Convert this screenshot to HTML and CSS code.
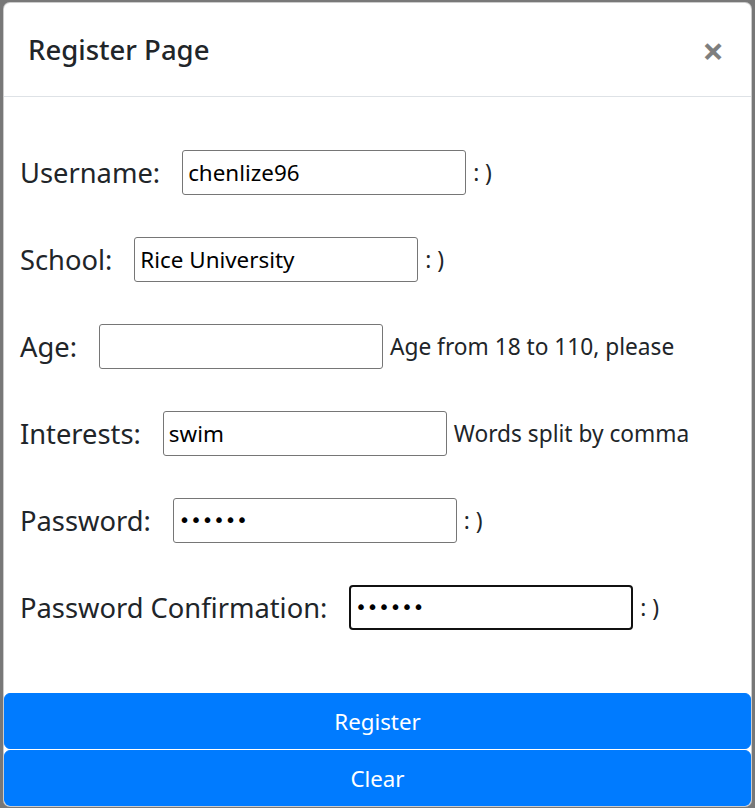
FILE: index.html
```html
<!DOCTYPE html>
<html>
<head>
<meta charset="utf-8">
<title>Register Page</title>
<link rel="stylesheet" href="styles.css">
</head>
<body>
<div class="modal">
  <div class="modal-header">
    <h5 class="modal-title">Register Page</h5>
    <button class="close" type="button" aria-label="Close">&times;</button>
  </div>
  <form class="modal-body">
    <div class="row">
      <label class="label" for="username">Username:</label>
      <input class="field" id="username" type="text" value="chenlize96">
      <span class="hint">: )</span>
    </div>
    <div class="row">
      <label class="label" for="school">School:</label>
      <input class="field" id="school" type="text" value="Rice University">
      <span class="hint">: )</span>
    </div>
    <div class="row">
      <label class="label" for="age">Age:</label>
      <input class="field" id="age" type="text" value="">
      <span class="hint">Age from 18 to 110, please</span>
    </div>
    <div class="row">
      <label class="label" for="interests">Interests:</label>
      <input class="field" id="interests" type="text" value="swim">
      <span class="hint">Words split by comma</span>
    </div>
    <div class="row">
      <label class="label" for="password">Password:</label>
      <input class="field field-pass" id="password" type="password" value="123456">
      <span class="hint">: )</span>
    </div>
    <div class="row">
      <label class="label" for="confirm">Password Confirmation:</label>
      <input class="field field-pass field-focus" id="confirm" type="password" value="123456">
      <span class="hint">: )</span>
    </div>
  </form>
  <div class="actions">
    <button class="btn" type="button">Register</button>
    <button class="btn" type="button">Clear</button>
  </div>
</div>
</body>
</html>
```

FILE: styles.css
```css
html, body {
  margin: 0;
  padding: 0;
  height: 100%;
}
body {
  background: #787878;
  font-family: "Noto Sans", "Open Sans", sans-serif;
  color: #212529;
  padding: 2px 3px 1px 3px;
  box-sizing: border-box;
}
.modal {
  background: #fff;
  border: 1px solid rgba(0,0,0,.2);
  border-radius: 7px;
  height: 805px;
  box-sizing: border-box;
  display: flex;
  flex-direction: column;
  overflow: hidden;
}
.modal-header {
  display: flex;
  align-items: center;
  justify-content: space-between;
  padding: 24px 24px;
  border-bottom: 1px solid #dee2e6;
  height: 94px;
  box-sizing: border-box;
}
.modal-title {
  margin: 0;
  font-size: 27.5px;
  font-weight: 500;
  line-height: 45px;
  color: #212529;
}
.close {
  background: none;
  border: 0;
  padding: 0;
  font-family: "Noto Sans", sans-serif;
  font-size: 38px;
  font-weight: 700;
  line-height: 1;
  color: #000;
  opacity: .5;
  margin-right: 3px;
}
.modal-body {
  flex: 1;
  padding: 53px 16px 0 16px;
  margin: 0;
  display: flex;
  flex-direction: column;
  gap: 42px;
}
.row {
  display: flex;
  align-items: center;
  height: 45px;
}
.label {
  font-size: 27.3px;
  color: #212529;
  margin-right: 22px;
}
.field {
  width: 284px;
  height: 45px;
  box-sizing: border-box;
  border: 1px solid #767676;
  border-radius: 3px;
  padding: 0 5px;
  font-family: "Noto Sans", sans-serif;
  font-size: 22.4px;
  color: #000;
  background: #fff;
  outline: none;
  margin: 0;
}
.field-pass {
  font-family: "DejaVu Sans", sans-serif;
  font-size: 19.5px;
}
.field-focus {
  border: 2px solid #111;
  border-radius: 4px;
  padding: 0 4px;
}
.hint {
  font-size: 22.7px;
  color: #212529;
  margin-left: 7px;
}
.actions {
  display: flex;
  flex-direction: column;
  gap: 1px;
}
.btn {
  height: 56px;
  border: 1px solid #007bff;
  border-radius: 6px;
  background: #007bff;
  color: #fff;
  font-family: "Noto Sans", sans-serif;
  font-size: 22.3px;
  width: 100%;
  padding: 0;
}
```
